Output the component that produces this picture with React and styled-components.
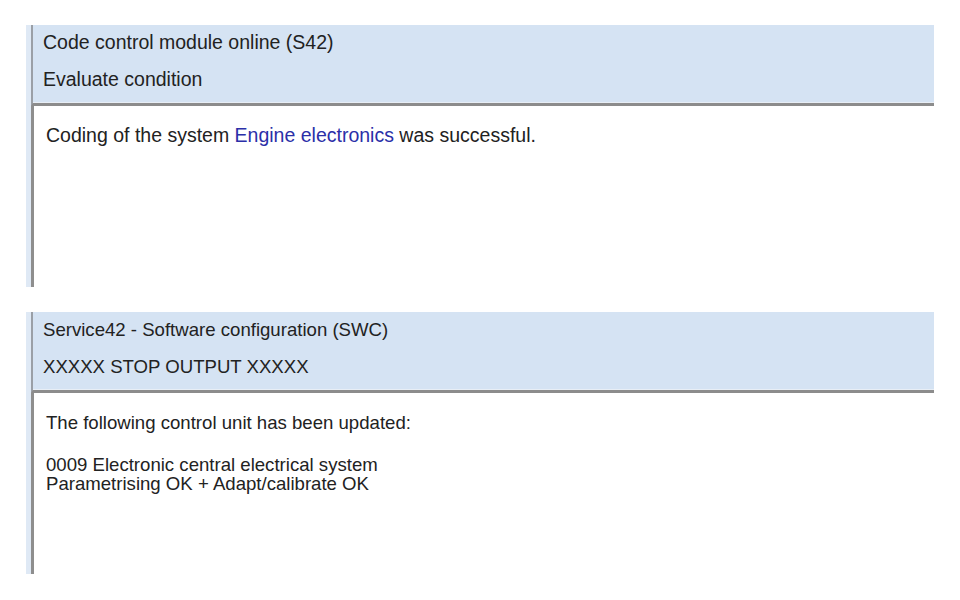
import React from "react";
import styled, { createGlobalStyle } from "styled-components";

const GlobalStyle = createGlobalStyle`
  body {
    margin: 0;
    background: #ffffff;
    font-family: "Liberation Sans", Arial, sans-serif;
  }
`;

function App() {
  return (
    <>
      <GlobalStyle />
      <StPage>
        <StPanel $size={19.5}>
          <StHeader>
            <StHeaderRow>Code control module online (S42)</StHeaderRow>
            <StHeaderRow>Evaluate condition</StHeaderRow>
          </StHeader>
          <StBody>
            <StLine>
              Coding of the system <StLink>Engine electronics</StLink> was
              successful.
            </StLine>
          </StBody>
        </StPanel>

        <StPanel $size={18.6}>
          <StHeader>
            <StHeaderRow>Service42 - Software configuration (SWC)</StHeaderRow>
            <StHeaderRow>XXXXX STOP OUTPUT XXXXX</StHeaderRow>
          </StHeader>
          <StBody>
            <StLine>The following control unit has been updated:</StLine>
            <StBlock>
              <StLine>0009 Electronic central electrical system</StLine>
              <StLine>Parametrising OK + Adapt/calibrate OK</StLine>
            </StBlock>
          </StBody>
        </StPanel>
      </StPage>
    </>
  );
}

export default App;

const StPage = styled.div`
  width: 960px;
  height: 600px;
  padding: 25px 26px 0 26px;
  box-sizing: border-box;
  display: flex;
  flex-direction: column;
  gap: 25px;
`;

const StPanel = styled.div`
  width: 908px;
  height: 262px;
  box-sizing: border-box;
  display: flex;
  flex-direction: column;
  border-left: 5px solid #dfe9f5;
  font-size: ${(p) => p.$size}px;
`;

const StHeader = styled.div`
  height: 78px;
  background: #d5e3f3;
  border-left: 2px solid #9a9fa6;
  border-bottom: 3px solid #8c8c8c;
  box-shadow: inset 0 -1px 0 #e8eef5;
  display: flex;
  flex-direction: column;
  padding-left: 10px;
`;

const StHeaderRow = styled.div`
  height: 39px;
  line-height: 39px;
  color: #222222;
  margin-top: -2px;
`;

const StBody = styled.div`
  flex: 1;
  background: #ffffff;
  border-left: 3px solid #8e8e8e;
  padding: 20px 0 0 12px;
  display: flex;
  flex-direction: column;
  gap: 23px;
`;

const StBlock = styled.div`
  display: flex;
  flex-direction: column;
`;

const StLine = styled.div`
  line-height: 19px;
  color: #222222;
`;

const StLink = styled.span`
  color: #2b2fa8;
`;
